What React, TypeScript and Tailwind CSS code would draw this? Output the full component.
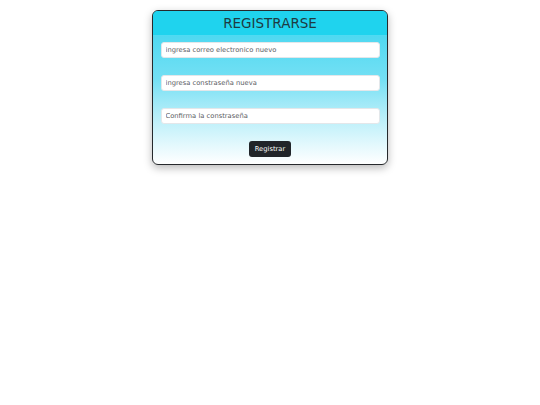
export default function App() {
  return (
    <div className="w-screen min-h-screen bg-white pt-[10px] font-['DejaVu_Sans',sans-serif]">
      <div className="mx-auto w-[236px] rounded-[6px] border-[1.5px] border-[#26292c] overflow-hidden shadow-[0_3px_8px_rgba(0,0,0,0.28)] bg-gradient-to-b from-[#2fd4ef] via-[#74e0f4] via-45% to-[#ffffff]">
        <div className="h-[25px] flex items-center justify-center bg-[#1fd3ee] border-b border-[#4fdaf2]">
          <h3 className="text-[13.5px] leading-none text-[#1e3a42] mt-[1px]">REGISTRARSE</h3>
        </div>
        <form className="flex flex-col px-[7.5px] pt-[6px] pb-[7px]">
          <input
            type="email"
            placeholder="ingresa correo electronico nuevo"
            className="h-[16px] w-full px-[4px] rounded-[3px] bg-white border border-[#e3e7ea] text-[6.75px] text-[#595c5f] placeholder:text-[#595c5f] outline-none"
          />
          <input
            type="password"
            placeholder="ingresa constraseña nueva"
            className="mt-[17px] h-[16px] w-full px-[4px] rounded-[3px] bg-white border border-[#e3e7ea] text-[6.75px] text-[#595c5f] placeholder:text-[#595c5f] outline-none"
          />
          <input
            type="password"
            placeholder="Confirma la constraseña"
            className="mt-[17px] h-[16px] w-full px-[4px] rounded-[3px] bg-white border border-[#e3e7ea] text-[6.75px] text-[#595c5f] placeholder:text-[#595c5f] outline-none"
          />
          <div className="mt-[17px] flex justify-center">
            <button
              type="submit"
              className="h-[16px] px-[6px] rounded-[3px] bg-[#212529] text-white text-[6.75px] leading-none"
            >
              Registrar
            </button>
          </div>
        </form>
      </div>
    </div>
  )
}
